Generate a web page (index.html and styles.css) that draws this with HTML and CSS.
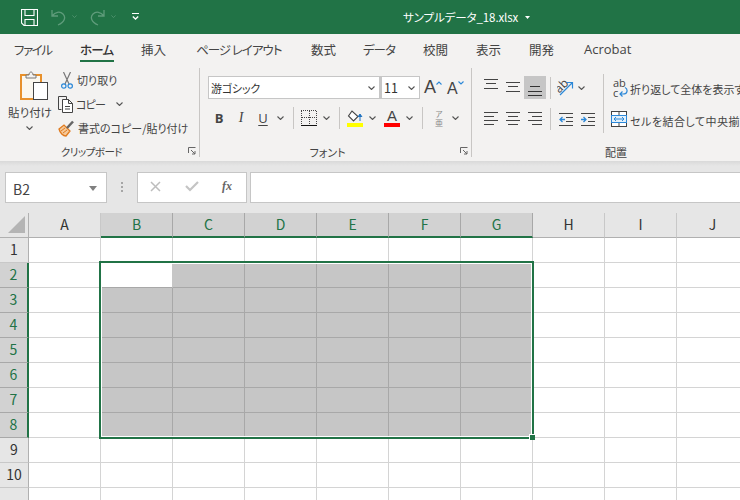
FILE: index.html
```html
<!DOCTYPE html>
<html lang="ja">
<head>
<meta charset="utf-8">
<title>サンプルデータ_18.xlsx</title>
<link rel="stylesheet" href="styles.css">
</head>
<body>
<svg class="defs" width="0" height="0">
  <defs>
    <symbol id="chev" viewBox="0 0 7 4"><path d="M.5.5 3.5 3.5 6.5.5" fill="none" stroke="#555" stroke-width="1.1"/></symbol>
    <symbol id="launch" viewBox="0 0 8 8"><path d="M.5 6V.5H7.5M3 3 7 7M7 4V7H4" fill="none" stroke="#666" stroke-width="1"/></symbol>
  </defs>
</svg>
<div class="app">
  <header class="titlebar">
    <svg class="qi-save" width="17" height="17" viewBox="0 0 17 17"><path d="M.5.5H16.500V16.500H3L.5 14Z M4 .5V6.500H13V.5 M4 16.500V10.500H13V16.500" fill="none" stroke="#fff" stroke-width="1.1"/></svg>
    <svg class="qi-undo" width="15" height="17" viewBox="0 0 15 17"><path d="M1 1V7H7M1.500 6.500C4 3 9 2 12 5S14 13 7 16" fill="none" stroke="#5f9c7b" stroke-width="1.300"/></svg>
    <svg class="qi-chev" width="5" height="3" viewBox="0 0 7 4"><path d="M.5.5 3.500 3.500 6.500.5" fill="none" stroke="#5f9c7b"/></svg>
    <svg class="qi-redo" width="15" height="17" viewBox="0 0 15 17"><path d="M14 1V7H8M13.500 6.500C11 3 6 2 3 5S1 13 8 16" fill="none" stroke="#5f9c7b" stroke-width="1.300"/></svg>
    <svg class="qi-chev" width="5" height="3" viewBox="0 0 7 4"><path d="M.5.5 3.500 3.500 6.500.5" fill="none" stroke="#5f9c7b"/></svg>
    <svg class="qi-more" width="7" height="7" viewBox="0 0 7 7"><path d="M0 .5H7" stroke="#fff"/><path d="M.8 3.500 3.500 6 6.200 3.500" fill="none" stroke="#fff" stroke-width="1.300"/></svg>
    <span class="doc-title">サンプルデータ_18.xlsx</span>
    <svg class="title-caret" width="5" height="3" viewBox="0 0 5 3"><path d="M0 0H5L2.500 3Z" fill="#fff"/></svg>
  </header>

  <nav class="tabs">
    <span class="tab t-file">ファイル</span>
    <span class="tab t-home">ホーム</span>
    <span class="tab t-ins">挿入</span>
    <span class="tab t-page">ページ レイアウト</span>
    <span class="tab t-calc">数式</span>
    <span class="tab t-data">データ</span>
    <span class="tab t-rev">校閲</span>
    <span class="tab t-view">表示</span>
    <span class="tab t-dev">開発</span>
    <span class="tab t-acro">Acrobat</span>
  </nav>

  <section class="ribbon">
    <div class="group g-clip">
      <div class="gbody">
        <div class="paste">
          <svg class="paste-icon" width="28" height="30" viewBox="0 0 28 30">
            <rect x="1" y="5" width="20" height="24" fill="#fbf7ee" stroke="#e8912c" stroke-width="2"/>
            <path d="M6 8V5H9C9 1 13 1 13 5H16V8Z" fill="#f3f2f1" stroke="#777"/>
            <rect x="13.500" y="12.500" width="14" height="17" fill="#fff" stroke="#444"/>
          </svg>
          <span class="paste-label">貼り付け</span>
          <svg class="paste-chev" width="7" height="4"><use href="#chev"/></svg>
        </div>
        <div class="clip-col">
          <div class="clip-row">
            <svg class="cut-icon" width="12" height="17" viewBox="0 0 12 17"><path d="M2.500 0 8 12M9.500 0 4 12" fill="none" stroke="#777" stroke-width="1.200"/><circle cx="2.800" cy="14" r="2.200" fill="none" stroke="#2b88d8" stroke-width="1.200"/><circle cx="9.200" cy="14" r="2.200" fill="none" stroke="#2b88d8" stroke-width="1.200"/></svg>
            <span class="clip-text cut-text">切り取り</span>
          </div>
          <div class="clip-row">
            <svg class="copy-icon" width="16" height="17" viewBox="0 0 16 17"><path d="M3.500 13.500H.5V.5H8.500V3" fill="none" stroke="#444"/><path d="M4.500 3.500H10.500L14.500 7.500V16.500H4.500ZM10.500 3.500V7.500H14.500M7 10.500H12M7 13H12" fill="#fff" stroke="#444"/></svg>
            <span class="clip-text copy-text">コピー</span>
            <svg class="copy-chev" width="7" height="4"><use href="#chev"/></svg>
          </div>
          <div class="clip-row">
            <svg class="brush-icon" width="17" height="17" viewBox="0 0 17 17"><path d="M1 9 6 5 12 11 8 16C5 16 2 13 1 9Z" fill="#f5c99a" stroke="#e07b1f" stroke-width="1.300"/><path d="M9 8 15 1.500" stroke="#666" stroke-width="2.500"/><path d="M3 11 7 8M5 13 9 10" stroke="#e07b1f"/></svg>
            <span class="clip-text">書式のコピー/貼り付け</span>
          </div>
        </div>
      </div>
      <div class="gfoot"><span class="glabel label-clip">クリップボード</span><span class="launch"><svg width="8" height="8"><use href="#launch"/></svg></span></div>
    </div>

    <div class="group g-font">
      <div class="gbody font-body">
        <div class="font-row1">
          <div class="combo combo-font"><span class="font-name">游ゴシック</span><svg width="7" height="4"><use href="#chev"/></svg></div>
          <div class="combo combo-size"><span>11</span><svg width="7" height="4"><use href="#chev"/></svg></div>
          <span class="grow-a">A</span>
          <svg class="caret-up" width="6" height="4" viewBox="0 0 6 4"><path d="M.5 3.500 3 1 5.500 3.500" fill="none" stroke="#2b88d8" stroke-width="1.100"/></svg>
          <span class="shrink-a">A</span>
          <svg class="caret-down" width="6" height="4" viewBox="0 0 6 4"><path d="M.5.5 3 3 5.500.5" fill="none" stroke="#2b88d8" stroke-width="1.100"/></svg>
        </div>
        <div class="font-row2">
          <span class="fmt fmt-b">B</span>
          <span class="fmt fmt-i">I</span>
          <span class="fmt fmt-u">U</span>
          <span class="chev"><svg width="7" height="4"><use href="#chev"/></svg></span>
          <span class="vsep sep-a"></span>
          <svg class="border-icon" width="16" height="16" viewBox="0 0 16 16"><path d="M0 .5H16M.5 1V15M15.500 1V15M8.500 1V15M1 7.500H15" fill="none" stroke="#444" stroke-dasharray="1 1"/><path d="M0 15.500H16" stroke="#111"/></svg>
          <span class="chev ch-3"><svg width="7" height="4"><use href="#chev"/></svg></span>
          <span class="vsep sep-a"></span>
          <span class="fill-wrap">
            <svg width="17" height="12" viewBox="0 0 17 12"><path d="M5 1 1.500 6 6.500 11 11 6.500Z" fill="#fff" stroke="#444" stroke-width="1.100"/><path d="M13 11V6M11 7 13 4 15 7" fill="#1f72c0" stroke="#1f72c0"/></svg>
            <span class="bar bar-yellow"></span>
          </span>
          <span class="chev ch-2"><svg width="7" height="4"><use href="#chev"/></svg></span>
          <span class="color-a"><span class="color-a-g">A</span><span class="bar bar-red"></span></span>
          <span class="chev ch-3"><svg width="7" height="4"><use href="#chev"/></svg></span>
          <span class="vsep sep-a"></span>
          <span class="phon"><span class="phon-a">ア</span><span class="phon-k">亜</span></span>
          <span class="chev ch-4"><svg width="7" height="4"><use href="#chev"/></svg></span>
        </div>
      </div>
      <div class="gfoot"><span class="glabel">フォント</span><span class="launch"><svg width="8" height="8"><use href="#launch"/></svg></span></div>
    </div>

    <div class="group g-align">
      <div class="gbody align-body">
        <div class="align-grid">
          <div class="align-row">
            <span class="acell"><svg width="14" height="18" viewBox="0 0 14 18"><path d="M0 1.500H14M2 5.500H12M0 10.500H14" stroke="#444"/></svg></span>
            <span class="acell"><svg width="14" height="18" viewBox="0 0 14 18"><path d="M0 4.500H14M2 8.500H12M0 13.500H14" stroke="#444"/></svg></span>
            <span class="acell acell-on"><svg width="14" height="18" viewBox="0 0 14 18"><path d="M2 8.500H12M0 13.500H14M0 17.500H14" stroke="#333"/></svg></span>
            <span class="vsep sep-b"></span>
            <svg class="orient-icon" width="18" height="18" viewBox="0 0 18 18"><text class="orient-text" x="-1" y="11" transform="rotate(-45 5 9)">ab</text><path d="M3 16 15 4M9.500 3.500H15.500V9.500" fill="none" stroke="#2b88d8" stroke-width="1.200"/></svg>
            <span class="chev ch-0"><svg width="7" height="4"><use href="#chev"/></svg></span>
          </div>
          <div class="align-row row-b">
            <span class="acell"><svg width="14" height="14" viewBox="0 0 14 14"><path d="M0 1.500H14M0 5.500H10M0 9.500H14M0 13.500H10" stroke="#444"/></svg></span>
            <span class="acell"><svg width="14" height="14" viewBox="0 0 14 14"><path d="M0 1.500H14M2 5.500H12M0 9.500H14M2 13.500H12" stroke="#444"/></svg></span>
            <span class="acell"><svg width="14" height="14" viewBox="0 0 14 14"><path d="M0 1.500H14M4 5.500H14M0 9.500H14M4 13.500H14" stroke="#444"/></svg></span>
            <span class="vsep sep-b"></span>
            <svg class="indent-l" width="14" height="14" viewBox="0 0 14 14"><path d="M0 1.500H14M7 5.500H14M7 9.500H14M0 13.500H14" stroke="#444"/><path d="M6 7.500H1M3.500 5 1 7.500 3.500 10" fill="none" stroke="#2b88d8" stroke-width="1.300"/></svg>
            <svg class="indent-r" width="14" height="14" viewBox="0 0 14 14"><path d="M0 1.500H14M7 5.500H14M7 9.500H14M0 13.500H14" stroke="#444"/><path d="M0 7.500H5M2.500 5 5 7.500 2.500 10" fill="none" stroke="#2b88d8" stroke-width="1.300"/></svg>
          </div>
        </div>
        <span class="vsep sep-tall"></span>
        <div class="wrap-col">
          <div class="wrap-row">
            <span class="wrap-icon"><span class="wrap-ab">ab</span><span class="wrap-c">c</span><svg class="wrap-arrow" width="9" height="10" viewBox="0 0 9 10"><path d="M6 .5C9 2 9 7 4 7H1M3.500 4.500 1 7 3.500 9.500" fill="none" stroke="#2b88d8" stroke-width="1.200"/></svg></span>
            <span class="wrap-text">折り返して全体を表示する</span>
          </div>
          <div class="wrap-row row-merge">
            <svg class="merge-icon" width="16" height="16" viewBox="0 0 16 16"><rect x=".5" y=".5" width="15" height="15" fill="#fff" stroke="#444"/><path d="M0 4.500H16M0 11.500H16M8 0V4M8 12V16" stroke="#444"/><rect x=".5" y="4.500" width="15" height="7" fill="#e3f0fa" stroke="#2b88d8"/><path d="M3 8H13M5 6 3 8 5 10M11 6 13 8 11 10" fill="none" stroke="#2b88d8"/></svg>
            <span class="wrap-text merge-text">セルを結合して中央揃え</span>
          </div>
        </div>
      </div>
      <div class="gfoot"><span class="glabel">配置</span><span class="launch"></span></div>
    </div>
  </section>

  <section class="formula">
    <div class="namebox"><span>B2</span><svg width="8" height="5" viewBox="0 0 8 5"><path d="M0 0H8L4 5Z" fill="#808080"/></svg></div>
    <span class="dots"><i></i><i></i><i></i></span>
    <div class="fbtns">
      <svg class="fb-x" width="11" height="11" viewBox="0 0 11 11"><path d="M1 1 10 10M10 1 1 10" stroke="#bdbdbd" stroke-width="1.500"/></svg>
      <svg class="fb-ok" width="14" height="12" viewBox="0 0 14 12"><path d="M1 6 5 10 13 2" fill="none" stroke="#c4c4c4" stroke-width="2.200"/></svg>
      <span class="fb-fx">fx</span>
    </div>
    <div class="finput"></div>
  </section>

  <section class="sheet">
    <div class="ch corner"><svg width="17" height="17" viewBox="0 0 17 17"><path d="M17 0V17H0Z" fill="#b4b4b4"/></svg></div>
    <div class="ch">A</div><div class="ch on">B</div><div class="ch on">C</div><div class="ch on">D</div><div class="ch on">E</div><div class="ch on">F</div><div class="ch on">G</div><div class="ch">H</div><div class="ch">I</div><div class="ch">J</div>

    <div class="rh">1</div><div class="c"></div><div class="c"></div><div class="c"></div><div class="c"></div><div class="c"></div><div class="c"></div><div class="c"></div><div class="c"></div><div class="c"></div><div class="c"></div>
    <div class="rh on">2</div><div class="c"></div><div class="c active"></div><div class="c s"></div><div class="c s"></div><div class="c s"></div><div class="c s"></div><div class="c s"></div><div class="c"></div><div class="c"></div><div class="c"></div>
    <div class="rh on">3</div><div class="c"></div><div class="c s"></div><div class="c s"></div><div class="c s"></div><div class="c s"></div><div class="c s"></div><div class="c s"></div><div class="c"></div><div class="c"></div><div class="c"></div>
    <div class="rh on">4</div><div class="c"></div><div class="c s"></div><div class="c s"></div><div class="c s"></div><div class="c s"></div><div class="c s"></div><div class="c s"></div><div class="c"></div><div class="c"></div><div class="c"></div>
    <div class="rh on">5</div><div class="c"></div><div class="c s"></div><div class="c s"></div><div class="c s"></div><div class="c s"></div><div class="c s"></div><div class="c s"></div><div class="c"></div><div class="c"></div><div class="c"></div>
    <div class="rh on">6</div><div class="c"></div><div class="c s"></div><div class="c s"></div><div class="c s"></div><div class="c s"></div><div class="c s"></div><div class="c s"></div><div class="c"></div><div class="c"></div><div class="c"></div>
    <div class="rh on">7</div><div class="c"></div><div class="c s"></div><div class="c s"></div><div class="c s"></div><div class="c s"></div><div class="c s"></div><div class="c s"></div><div class="c"></div><div class="c"></div><div class="c"></div>
    <div class="rh on">8</div><div class="c"></div><div class="c s"></div><div class="c s"></div><div class="c s"></div><div class="c s"></div><div class="c s"></div><div class="c s"></div><div class="c"></div><div class="c"></div><div class="c"></div>
    <div class="rh">9</div><div class="c"></div><div class="c"></div><div class="c"></div><div class="c"></div><div class="c"></div><div class="c"></div><div class="c"></div><div class="c"></div><div class="c"></div><div class="c"></div>
    <div class="rh">10</div><div class="c"></div><div class="c"></div><div class="c"></div><div class="c"></div><div class="c"></div><div class="c"></div><div class="c"></div><div class="c"></div><div class="c"></div><div class="c"></div>
    <div class="rh"></div><div class="c"></div><div class="c"></div><div class="c"></div><div class="c"></div><div class="c"></div><div class="c"></div><div class="c"></div><div class="c"></div><div class="c"></div><div class="c"></div>

    <div class="selection"></div>
    <div class="handle"></div>
  </section>
</div>
</body>
</html>
```

FILE: styles.css
```css
* { box-sizing: border-box; }
html, body { margin: 0; padding: 0; }
body {
  width: 740px; height: 500px; overflow: hidden; background: #fff;
  font-family: "Noto Sans CJK JP", "Noto Sans", sans-serif;
  font-feature-settings: "palt";
  color: #444;
}
.defs { position: absolute; }
svg { display: block; flex: none; }
.app { width: 740px; height: 500px; overflow: hidden; display: flex; flex-direction: column; }

/* title bar */
.titlebar { height: 34px; flex: none; background: #217346; display: flex; align-items: center; padding-left: 21px; }
.qi-undo { margin-left: 13px; }
.qi-chev { margin-left: 6px; margin-top: -1px; }
.qi-redo { margin-left: 13px; }
.qi-more { margin-left: 16px; margin-top: -2px; }
.doc-title { margin-left: 264px; color: #fff; font-size: 11.5px; line-height: 16px; width: 121px; white-space: nowrap; letter-spacing: -.1px; }
.title-caret { margin-left: 1px; }

/* tabs */
.tabs { height: 32px; flex: none; background: #f3f2f1; display: flex; }
.tab { font-size: 12.5px; line-height: 31px; height: 28px; white-space: nowrap; color: #444; flex: none; }
.t-file { margin-left: 14px; width: 37px; letter-spacing: -1.400px; }
.t-home { margin-left: 29px; width: 34px; color: #333; font-weight: 500; border-bottom: 2px solid #217346; letter-spacing: -.8px; }
.t-ins { margin-left: 27px; width: 26px; }
.t-page { margin-left: 29px; width: 87px; letter-spacing: -1px; }
.t-calc { margin-left: 28px; width: 26px; }
.t-data { margin-left: 26px; width: 34px; letter-spacing: -1px; }
.t-rev { margin-left: 26px; width: 26px; }
.t-view { margin-left: 27px; width: 26px; }
.t-dev { margin-left: 27px; width: 26px; }
.t-acro { margin-left: 29px; font-family: "Open Sans", sans-serif; font-size: 13px; }

/* ribbon */
.ribbon { height: 95px; flex: none; background: #f3f2f1; padding: 2px 0 4px; display: flex; overflow: hidden; }
.group { flex: none; height: 89px; display: flex; flex-direction: column; border-right: 1px solid #c8c6c4; }
.g-clip { width: 200px; }
.g-font { width: 272px; }
.g-align { width: 304px; border-right: 0; }
.gbody { height: 78px; flex: none; }
.gfoot { height: 11px; flex: none; display: flex; }
.glabel { flex: 1; text-align: center; font-size: 11px; line-height: 12px; color: #444; white-space: nowrap; }
.label-clip { font-size: 10.5px; letter-spacing: -.5px; }
.launch { width: 16px; flex: none; padding: 1px 0 0 5px; }
.vsep { display: block; width: 1px; flex: none; background: #c8c6c4; }

/* clipboard */
.g-clip .gbody { display: flex; }
.paste { width: 58px; flex: none; display: flex; flex-direction: column; align-items: center; padding-top: 2px; padding-left: 4px; }
.paste-icon { margin-left: 5px; }
.paste-label { font-size: 11.5px; line-height: 14px; margin-top: 5px; margin-left: -2px; white-space: nowrap; }
.paste-chev { margin-top: 7px; margin-left: -4px; }
.clip-col { display: flex; flex-direction: column; }
.clip-row { height: 24px; display: flex; align-items: center; }
.cut-icon { margin-left: 3px; }
.clip-text { font-size: 11px; line-height: 16px; margin-left: 3px; white-space: nowrap; }
.cut-text { margin-left: 4px; }
.copy-text { letter-spacing: -.8px; margin-left: 2px; }
.copy-chev { margin-left: 11px; }
.brush-icon { margin-left: 0; }

/* font */
.font-body { padding: 8px 0 0 8px; }
.font-row1 { height: 23px; display: flex; align-items: center; }
.combo { height: 23px; background: #fff; border: 1px solid #c6c6c6; display: flex; align-items: center; justify-content: space-between; padding: 0 4px 0 2px; color: #333; }
.font-name { font-size: 11px; line-height: 20px; letter-spacing: -.2px; }
.combo-font { width: 172px; }
.combo-size { width: 40px; border-left-width: 2px; font-size: 12.5px; padding-left: 2px; }
.grow-a { margin-left: 4px; font: 400 18px/23px "Liberation Sans", sans-serif; color: #444; }
.caret-up { margin: -10px 0 0 0; }
.shrink-a { margin-left: 5px; font: 400 16px/23px "Liberation Sans", sans-serif; color: #444; padding-top: 1px; }
.caret-down { margin: -10px 0 0 0; }
.font-row2 { height: 22px; margin-top: 8px; display: flex; align-items: center; }
.fmt { width: 22px; flex: none; text-align: center; line-height: 22px; color: #444; }
.fmt-b { font: 700 13px/22px "Open Sans", sans-serif; }
.fmt-i { font: italic 400 14px/22px "Liberation Serif", serif; }
.fmt-u { font: 400 13px/22px "Open Sans", sans-serif; text-decoration: underline; text-underline-offset: 2px; }
.chev { width: 12px; flex: none; display: flex; justify-content: center; }
.sep-a { height: 22px; margin-left: 7px; }
.border-icon { margin-left: 7px; }
.ch-3 { margin-left: 3px; }
.ch-2 { margin-left: 2px; }
.ch-4 { margin-left: 4px; }
.ch-0 { margin-left: 0; }
.fill-wrap { margin-left: 7px; width: 17px; flex: none; display: flex; flex-direction: column; margin-top: 1px; }
.bar { display: block; height: 4px; width: 16px; margin-top: 1px; }
.bar-yellow { background: #ffff00; }
.bar-red { background: #ff0000; }
.color-a { margin-left: 6px; width: 16px; flex: none; display: flex; flex-direction: column; align-items: center; }
.color-a-g { font: 400 15px/13px "Liberation Sans", sans-serif; color: #444; }
.phon { margin-left: 10px; width: 12px; flex: none; display: flex; flex-direction: column; align-items: center; color: #888; }
.phon-a { font-size: 7.5px; line-height: 9px; }
.phon-k { font-size: 8px; line-height: 10px; }

/* alignment */
.align-body { display: flex; padding: 8px 0 0 8px; }
.align-grid { width: 123px; flex: none; }
.align-row { height: 23px; display: flex; align-items: center; }
.row-b { margin-top: 8px; }
.acell { width: 22px; height: 23px; flex: none; display: flex; align-items: flex-start; justify-content: center; padding-top: 2px; }
.row-b .acell { padding-top: 4px; }
.acell-on { background: #c6c6c6; }
.sep-b { height: 22px; margin-left: 4px; }
.orient-icon { margin-left: 6px; }
.orient-text { font: 400 12px "Open Sans", sans-serif; fill: #444; }
.indent-l, .indent-r { margin-left: 8px; margin-top: 1px; }
.sep-tall { height: 59px; margin-top: -2px; }
.wrap-col { padding-left: 7px; }
.wrap-row { height: 23px; display: flex; align-items: center; }
.row-merge { margin-top: 9px; }
.wrap-icon { position: relative; display: block; width: 16px; height: 20px; margin-left: 2px; flex: none; color: #444; }
.wrap-ab { position: absolute; left: 0; top: 0; font: 400 11px/10px "Open Sans", sans-serif; }
.wrap-c { position: absolute; left: 0; top: 10px; font: 400 11px/10px "Open Sans", sans-serif; }
.wrap-arrow { position: absolute; left: 6px; top: 9px; }
.wrap-text { font-size: 11px; line-height: 16px; margin-left: 1px; white-space: nowrap; padding-top: 2px; }
.merge-icon { margin-bottom: 1px; }
.merge-text { margin-left: 3px; letter-spacing: .5px; }

/* formula bar */
.formula { height: 52px; flex: none; background: linear-gradient(#d9d9d9 0, #e6e6e6 5px); padding: 11px 0 10px 5px; display: flex; }
.namebox { width: 102px; height: 31px; background: #fff; border: 1px solid #c6c6c6; display: flex; align-items: center; justify-content: space-between; padding: 2px 9px 0 7px; font-size: 14px; color: #444; flex: none; }
.dots { width: 30px; flex: none; display: flex; flex-direction: column; align-items: center; gap: 2px; padding-top: 10px; }
.dots i { display: block; width: 2px; height: 2px; background: #a6a6a6; }
.fbtns { width: 110px; height: 31px; flex: none; background: #fff; border: 1px solid #c6c6c6; display: flex; align-items: center; margin-right: 3px; padding-bottom: 3px; }
.fb-x { margin-left: 12px; }
.fb-ok { margin-left: 24px; }
.fb-fx { margin-left: 23px; font: italic 700 12px/14px "Liberation Serif", serif; color: #666; }
.finput { flex: 1; height: 31px; background: #fff; border: 1px solid #c6c6c6; border-right: 0; }

/* sheet */
.sheet { position: relative; flex: none; display: grid; grid-template-columns: 29px repeat(10, 72px); grid-auto-rows: 25px; width: 749px; }
.ch, .rh { background: #e6e6e6; font-size: 14px; text-align: center; color: #333; }
.ch { line-height: 23px; border-right: 1px solid #c8c8c8; border-bottom: 1px solid #b0b0b0; }
.rh { line-height: 22px; border-right: 1px solid #b0b0b0; border-bottom: 1px solid #c8c8c8; }
.corner { border-right-color: #b0b0b0; padding: 3px 0 0 8px; }
.ch.on { background: #d2d2d2; color: #217346; border-right-color: #a8a8a8; border-bottom: 2px solid #217346; }
.rh.on { background: #d2d2d2; color: #217346; border-bottom-color: #a8a8a8; border-right: 2px solid #217346; }
.c { background: #fff; border-right: 1px solid #d4d4d4; border-bottom: 1px solid #d4d4d4; }
.c.s { background: #c6c6c6; border-right-color: #a8a8a8; border-bottom-color: #a8a8a8; }
.c.active { border-bottom-color: #a8a8a8; border-right-color: #c6c6c6; }

/* selection (lies over the cells) */
.selection { position: absolute; left: 99px; top: 48px; width: 435px; height: 178px; border: 2px solid #217346; box-shadow: inset 0 0 0 1px #fff; }
.handle { position: absolute; left: 529px; top: 221px; width: 6px; height: 6px; background: #217346; border-left: 1px solid #fff; border-top: 1px solid #fff; }
```
